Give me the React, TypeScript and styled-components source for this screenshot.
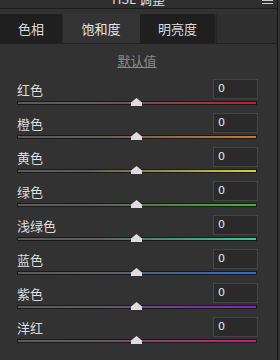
import React, { ReactElement } from 'react';
import styled, { createGlobalStyle } from 'styled-components';

const GlobalStyle = createGlobalStyle`
    html, body {
        margin: 0;
        padding: 0;
        background: #323232;
    }
    body {
        font-family: "Noto Sans CJK SC", "Liberation Sans", sans-serif;
    }
`;

const Panel = styled.div`
    width: 277px;
    height: 360px;
    background: #323232;
    border-right: 1px solid #151515;
    overflow: hidden;
    position: relative;
`;

const TitleBar = styled.div`
    height: 8px;
    overflow: hidden;
    border-bottom: 1px solid #1c1c1c;
    display: flex;
    justify-content: center;
    position: relative;
    background: #2e2e2e;
`;

const TitleText = styled.span`
    color: #e0e0e0;
    font-size: 13px;
    line-height: 16px;
    margin-top: -9px;
`;

const MenuIcon = styled.svg`
    position: absolute;
    right: 3px;
    top: 0;
`;

const TabBar = styled.div`
    display: flex;
    margin-top: 5px;
    height: 29px;
    border-bottom: 1px solid #222;
`;

const Tab = styled.div<{ $active?: boolean; $width: number }>`
    width: ${p => p.$width}px;
    display: flex;
    align-items: center;
    justify-content: center;
    font-size: 13px;
    color: ${p => (p.$active ? '#e6e6e6' : '#dcdcdc')};
    background: ${p => (p.$active ? '#333333' : '#1f1f1f')};
    border-right: 1px solid ${p => (p.$active ? '#333' : '#2a2a2a')};
`;

const TabFill = styled.div`
    flex: 1;
    background: #2f2f2f;
    border-left: 1px solid #262626;
`;

const Content = styled.div`
    padding: 8px 20px 0 17px;
`;

const DefaultLink = styled.div`
    text-align: center;
    font-size: 13px;
    line-height: 18px;
    color: #8a8a8a;
    text-decoration: underline;
    margin-bottom: 9px;
`;

const Row = styled.div`
    height: 34px;
`;

const RowTop = styled.div`
    display: flex;
    align-items: center;
    justify-content: space-between;
    height: 20px;
`;

const Label = styled.span`
    font-size: 13px;
    color: #dedede;
`;

const ValueBox = styled.div`
    width: 39px;
    height: 18px;
    border: 1px solid #454545;
    background: #2a2a2a;
    color: #e8e8e8;
    font-family: "DejaVu Sans", sans-serif;
    font-size: 11px;
    line-height: 18px;
    padding-left: 4px;
    margin-right: -1px;
`;

const TrackWrap = styled.div`
    position: relative;
    margin-top: 2px;
    height: 4px;
`;

const Track = styled.div<{ $color: string }>`
    height: 2px;
    border: 1px solid #1a1a1a;
    background: linear-gradient(to right, #5a5a5a 0%, #5e5e5e 30%, ${p => p.$color} 100%);
`;

const Thumb = styled.div`
    position: absolute;
    left: 114px;
    top: -3px;
    width: 11px;
    height: 8px;
    background: #e0dde0;
    clip-path: polygon(50% 0, 100% 55%, 100% 100%, 0 100%, 0 55%);
`;

const channels = [
    { name: '红色', color: '#c01d3e' },
    { name: '橙色', color: '#d0782a' },
    { name: '黄色', color: '#d6d23a' },
    { name: '绿色', color: '#3fb82a' },
    { name: '浅绿色', color: '#2fcf9a' },
    { name: '蓝色', color: '#2a6fd0' },
    { name: '紫色', color: '#8a1ec8' },
    { name: '洋红', color: '#c8207e' },
];

export default function App(): ReactElement {
    return (
        <Panel>
            <GlobalStyle />
            <TitleBar>
                <TitleText>HSL 调整</TitleText>
                <MenuIcon width="12" height="6" viewBox="0 0 12 6">
                    <rect x="0" y="0" width="11" height="1" fill="#cfcfcf" />
                    <rect x="0" y="3" width="11" height="1" fill="#cfcfcf" />
                </MenuIcon>
            </TitleBar>
            <TabBar>
                <Tab $width={62}>色相</Tab>
                <Tab $width={76} $active>
                    饱和度
                </Tab>
                <Tab $width={75}>明亮度</Tab>
                <TabFill />
            </TabBar>
            <Content>
                <DefaultLink>默认值</DefaultLink>
                {channels.map(c => (
                    <Row key={c.name}>
                        <RowTop>
                            <Label>{c.name}</Label>
                            <ValueBox>0</ValueBox>
                        </RowTop>
                        <TrackWrap>
                            <Track $color={c.color} />
                            <Thumb />
                        </TrackWrap>
                    </Row>
                ))}
            </Content>
        </Panel>
    );
}
